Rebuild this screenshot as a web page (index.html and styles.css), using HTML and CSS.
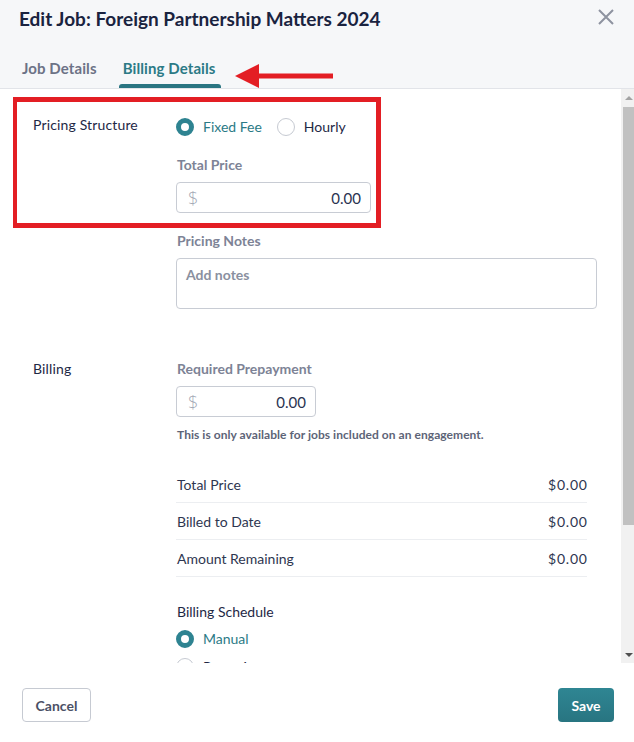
FILE: index.html
```html
<!DOCTYPE html>
<html>
<head>
<meta charset="utf-8">
<link rel="stylesheet" href="styles.css">
</head>
<body>
<div class="modal">
  <header class="header">
    <div class="title-row">
      <h1 class="title">Edit Job: Foreign Partnership Matters 2024</h1>
      <svg class="close" width="18" height="18" viewBox="0 0 18 18"><path d="M2 2 L16 16 M16 2 L2 16" stroke="#8e93a0" stroke-width="2" fill="none"/></svg>
    </div>
    <nav class="tabs">
      <div class="tab">Job Details</div>
      <div class="tab active">Billing Details</div>
    </nav>
  </header>

  <div class="main">
    <div class="content">
      <section class="row">
        <div class="row-label">Pricing Structure</div>
        <div class="fields">
          <div class="radio-group">
            <label class="radio checked"><span class="dot"></span><span class="radio-text">Fixed Fee</span></label>
            <label class="radio"><span class="dot"></span><span class="radio-text">Hourly</span></label>
          </div>
          <div class="field-label gap-16">Total Price</div>
          <div class="money wide"><span class="cur">$</span><span class="val">0.00</span></div>
          <div class="field-label gap-18">Pricing Notes</div>
          <div class="notes">Add notes</div>
        </div>
      </section>

      <section class="row billing">
        <div class="row-label">Billing</div>
        <div class="fields">
          <div class="field-label">Required Prepayment</div>
          <div class="money narrow"><span class="cur">$</span><span class="val">0.00</span></div>
          <p class="help">This is only available for jobs included on an engagement.</p>
          <div class="summary">
            <div class="sum-row"><span>Total Price</span><span class="amt">$0.00</span></div>
            <div class="sum-row"><span>Billed to Date</span><span class="amt">$0.00</span></div>
            <div class="sum-row"><span>Amount Remaining</span><span class="amt">$0.00</span></div>
          </div>
          <div class="sched-title">Billing Schedule</div>
          <label class="radio checked sched"><span class="dot"></span><span class="radio-text">Manual</span></label>
          <label class="radio sched second"><span class="dot"></span><span class="radio-text dark">Recurring</span></label>
        </div>
      </section>
    </div>
    <div class="scrollbar">
      <div class="sb-arrow up"></div>
      <div class="sb-thumb"></div>
      <div class="sb-track"></div>
      <div class="sb-arrow down"></div>
    </div>
  </div>

  <footer class="footer">
    <button class="btn cancel">Cancel</button>
    <button class="btn save">Save</button>
  </footer>

  <div class="annot-box"></div>
  <svg class="annot-arrow" width="100" height="26" viewBox="0 0 100 26">
    <polygon points="1,13 25,1 25,25" fill="#e31e24"/>
    <rect x="24" y="10.5" width="75" height="5" fill="#e31e24"/>
  </svg>
</div>
</body>
</html>
```

FILE: styles.css
```css
* { box-sizing: border-box; }
html, body { margin: 0; padding: 0; }
body {
  font-family: Lato, "Open Sans", sans-serif;
  color: #1e2845;
  background: #ffffff;
  width: 634px;
  height: 742px;
  overflow: hidden;
}
.modal {
  position: relative;
  width: 634px;
  height: 742px;
  display: flex;
  flex-direction: column;
}
.header {
  background: #f6f7f9;
  border-bottom: 1px solid #e2e4e9;
  height: 89px;
  flex: none;
}
.title-row {
  height: 58px;
  display: flex;
  justify-content: space-between;
  align-items: flex-start;
  padding: 7px 19px 0 19px;
}
.title {
  margin: 0;
  font-size: 19px;
  line-height: 24px;
  font-weight: 700;
  color: #1a2340;
}
.close { margin-top: 1px; }
.tabs {
  display: flex;
  padding-left: 18px;
  gap: 18px;
}
.tab {
  position: relative;
  height: 30px;
  padding: 0 4px;
  font-size: 15px;
  line-height: 20px;
  font-weight: 700;
  color: #6c7286;
  letter-spacing: 0.1px;
}
.tab.active { color: #2b7a86; padding: 0 5px 0 4px; }
.tab.active::after {
  content: "";
  position: absolute;
  left: 0;
  right: 0;
  bottom: 0;
  height: 4px;
  border-radius: 3px 3px 0 0;
  background: #2a7582;
}
.main {
  flex: 1;
  display: flex;
  min-height: 0;
}
.content {
  flex: 1;
  overflow: hidden;
  padding: 26px 24px 0 33px;
}
.row {
  display: grid;
  grid-template-columns: 143px 1fr;
}
.row.billing { margin-top: 50px; }
.row-label {
  font-size: 14px;
  line-height: 20px;
  color: #1e2845;
  letter-spacing: 0.15px;
}
.fields {
  display: flex;
  flex-direction: column;
  align-items: flex-start;
}
.radio-group {
  display: flex;
  gap: 15px;
  height: 24px;
  align-items: center;
}
.radio {
  display: flex;
  align-items: center;
  gap: 9px;
  font-size: 14px;
  line-height: 20px;
  color: #1e2845;
}
.radio .dot {
  width: 18px;
  height: 18px;
  border-radius: 50%;
  border: 1px solid #c6cad2;
  background: #fff;
}
.radio.checked .dot { border: 5px solid #2e8391; }
.radio.checked .radio-text { color: #2b7a86; }
.radio-text.dark { color: #1e2845; }
.field-label {
  font-size: 14px;
  line-height: 20px;
  font-weight: 700;
  color: #7d8396;
  padding-left: 1px;
}
.gap-16 { margin-top: 16px; }
.gap-18 { margin-top: 18px; }
.money {
  margin-top: 7px;
  height: 31px;
  border: 1px solid #c8ccd4;
  border-radius: 4px;
  display: flex;
  align-items: center;
  justify-content: space-between;
  padding: 0 9px 0 11px;
  background: #fff;
}
.money.wide { width: 195px; }
.money.narrow { width: 140px; }
.cur {
  font-family: "Open Sans", sans-serif;
  font-size: 18px;
  font-weight: 300;
  color: #a5aab6;
}
.val {
  font-size: 15px;
  color: #2a3350;
}
.notes {
  margin-top: 7px;
  width: 421px;
  height: 51px;
  border: 1px solid #c8ccd4;
  border-radius: 4px;
  padding: 6px 9px;
  font-size: 14px;
  line-height: 20px;
  font-weight: 700;
  color: #8a90a0;
}
.help {
  margin: 10px 0 0 1px;
  font-size: 12px;
  line-height: 16px;
  font-weight: 700;
  color: #5d6477;
  letter-spacing: 0.05px;
}
.summary {
  margin-top: 23px;
  width: 411px;
}
.sum-row {
  height: 37px;
  border-bottom: 1px solid #eceef1;
  display: flex;
  justify-content: space-between;
  align-items: center;
  padding: 0 0 0 1px;
  font-size: 14px;
  color: #2e3650;
}
.amt { letter-spacing: 0.8px; margin-right: -0.8px; }
.sched-title {
  margin-top: 25px;
  font-size: 14px;
  line-height: 20px;
  color: #1e2845;
  padding-left: 1px;
}
.radio.sched { margin-top: 7px; }
.radio.sched.second { margin-top: 8px; }
.scrollbar {
  width: 13px;
  flex: none;
  background: #f1f1f1;
  display: flex;
  flex-direction: column;
  align-items: flex-end;
}
.sb-arrow {
  width: 11px;
  height: 17px;
  display: flex;
  align-items: center;
  justify-content: center;
}
.sb-arrow::before {
  content: "";
  width: 0;
  height: 0;
  border-left: 4px solid transparent;
  border-right: 4px solid transparent;
}
.sb-arrow.up::before { border-bottom: 4px solid #a3a3a3; }
.sb-arrow.down::before { border-top: 4px solid #505050; }
.sb-thumb {
  width: 11px;
  height: 418px;
  background: #c1c1c1;
  margin-top: 1px;
}
.sb-track { flex: 1; }
.footer {
  height: 79px;
  flex: none;
  display: flex;
  justify-content: space-between;
  align-items: flex-start;
  padding: 25px 20px 0 22px;
  background: #fff;
}
.btn {
  height: 34px;
  border-radius: 4px;
  font-family: Lato, sans-serif;
  font-size: 14px;
  font-weight: 700;
  padding: 0;
  cursor: pointer;
}
.cancel {
  width: 69px;
  background: #fff;
  border: 1px solid #c6cad2;
  color: #4b5166;
}
.save {
  width: 56px;
  border: none;
  background: linear-gradient(#2f8693, #287581);
  color: #fff;
}
.annot-box {
  position: absolute;
  left: 13px;
  top: 97px;
  width: 368px;
  height: 131px;
  border: 5px solid #e31e24;
  border-left-width: 4px;
}
.annot-arrow {
  position: absolute;
  left: 234px;
  top: 63px;
}
```
